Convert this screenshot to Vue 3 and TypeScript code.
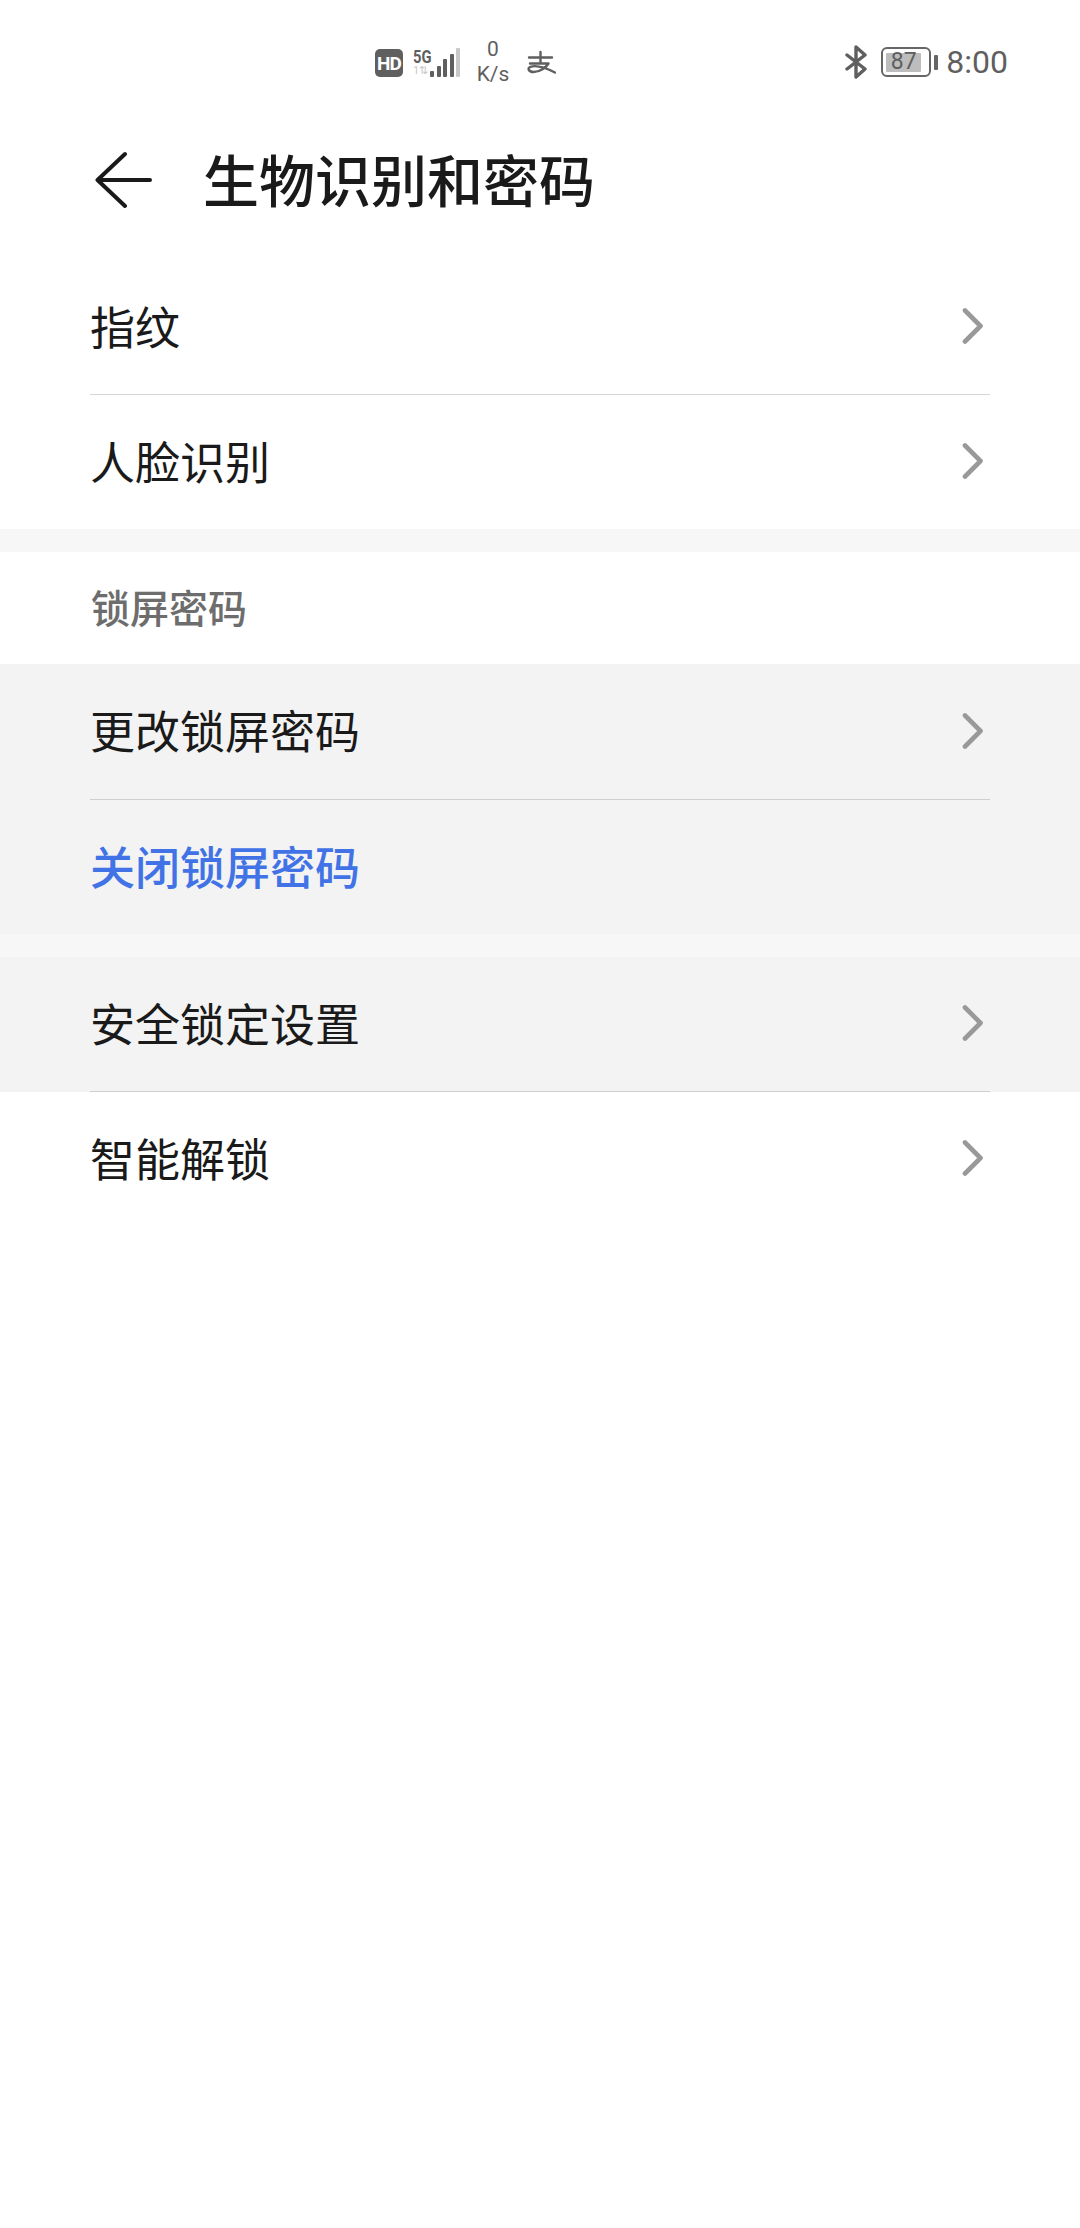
<script setup lang="ts">
interface Row { label: string; chevron?: boolean; blue?: boolean; pressed?: boolean; divider?: boolean }
const first: Row[] = [
  { label: '指纹', chevron: true, divider: true },
  { label: '人脸识别', chevron: true },
]
const second: Row[] = [
  { label: '更改锁屏密码', chevron: true, pressed: true, divider: true },
  { label: '关闭锁屏密码', blue: true, pressed: true },
]
const third: Row[] = [
  { label: '安全锁定设置', chevron: true, pressed: true, divider: true },
  { label: '智能解锁', chevron: true },
]
const groups = [
  { rows: first },
  { header: '锁屏密码', rows: second },
  { rows: third },
]
const bars = [6, 11, 18, 23, 29]
</script>

<template>
  <div class="page">
    <div class="status">
      <div class="status-center">
        <span class="hd">HD</span>
        <div class="signal">
          <div class="sig-labels">
            <span class="five-g">5G</span>
            <span class="one-x">1⇅</span>
          </div>
          <div class="bars">
            <i v-for="(h, i) in bars" :key="i" class="bar" :class="{ faint: i === 4 }" :style="{ height: h + 'px' }"></i>
          </div>
        </div>
        <div class="speed"><span>0</span><span>K/s</span></div>
        <svg class="alipay" width="30" height="26" viewBox="0 0 30 26" fill="none" stroke="#5f5f5f" stroke-width="2.400" stroke-linecap="round" stroke-linejoin="round">
          <path d="M3 8.500H26M14.500 3V14.500M4 14.500H22.500C20 18.500 14 23 7.500 23C2.500 23 1 19 4.500 17.800C10 16 19 18.500 29 23.500" />
        </svg>
      </div>
      <div class="status-right">
        <svg class="bt" width="24" height="34" viewBox="0 0 24 34" fill="none" stroke="#5f5f5f" stroke-width="3.400" stroke-linecap="round" stroke-linejoin="round">
          <path d="M3 10L21 24L12 32V2L21 10L3 24" />
        </svg>
        <div class="battery">
          <div class="cell"><span class="level">87</span></div>
          <i class="nub"></i>
        </div>
        <span class="time">8:00</span>
      </div>
    </div>

    <header class="title-bar">
      <svg class="back" width="58" height="58" viewBox="0 0 58 58" fill="none" stroke="#1a1a1a" stroke-width="4" stroke-linecap="round" stroke-linejoin="round">
        <path d="M30 3L2.500 29L30 55M2.500 29H55" />
      </svg>
      <h1 class="title">生物识别和密码</h1>
    </header>

    <main class="list">
      <section v-for="(g, gi) in groups" :key="gi" class="group">
        <div v-if="g.header" class="group-header">{{ g.header }}</div>
        <div v-for="r in g.rows" :key="r.label" class="row" :class="{ pressed: r.pressed }">
          <div class="row-inner" :class="{ divider: r.divider }">
            <span class="label" :class="{ blue: r.blue }">{{ r.label }}</span>
            <svg v-if="r.chevron" class="chev" width="24" height="36" viewBox="0 0 24 36" fill="none" stroke="#999999" stroke-width="4.600" stroke-linecap="round" stroke-linejoin="round">
              <path d="M3 2.500L18.500 18L3 33.500" />
            </svg>
          </div>
        </div>
      </section>
    </main>
  </div>
</template>

<style>
html, body { margin: 0; background: #fff; }
</style>

<style scoped>
.page {
  width: 1080px;
  height: 2228px;
  background: #fff;
  overflow: hidden;
  font-family: "Noto Sans CJK SC", "Noto Sans", sans-serif;
  color: #1a1a1a;
}
.status {
  height: 124px;
  box-sizing: border-box;
  padding: 38px 72px 0 375px;
  display: flex;
  justify-content: space-between;
  align-items: flex-start;
  font-family: Roboto, "Noto Sans", sans-serif;
  color: #5f5f5f;
}
.status-center { display: flex; align-items: center; height: 48px; }
.hd {
  width: 28px;
  height: 28px;
  margin-top: 2px;
  border-radius: 5px;
  background: #5f5f5f;
  color: #fff;
  font-size: 19px;
  font-weight: 700;
  letter-spacing: -1px;
  display: flex;
  align-items: center;
  justify-content: center;
}
.signal { display: flex; align-items: flex-end; margin-left: 10px; height: 30px; }
.sig-labels { display: flex; flex-direction: column; width: 17px; }
.five-g { font-size: 18px; font-weight: 700; line-height: 17px; transform: scaleX(0.82); transform-origin: left; }
.one-x { font-size: 11px; line-height: 12px; color: #c8c8c8; }
.bars { display: flex; align-items: flex-end; gap: 2.500px; }
.bar { width: 4px; background: #5f5f5f; border-radius: 1px; }
.bar.faint { background: #c8c8c8; }
.speed {
  display: flex;
  flex-direction: column;
  align-items: center;
  width: 36px;
  margin-left: 15px;
  font-size: 21px;
  line-height: 25px;
}
.alipay { margin-left: 15px; }
.status-right { display: flex; align-items: center; height: 48px; }
.bt { margin-right: 13px; }
.battery { display: flex; align-items: center; margin-right: 8px; }
.cell {
  width: 50px;
  height: 30px;
  box-sizing: border-box;
  border: 2.500px solid #666;
  border-radius: 6px;
  padding: 3.500px 3px;
  display: flex;
}
.level {
  flex: 0 0 87%;
  background: #bdbdbd;
  border-radius: 1px;
  color: #5f5f5f;
  font-size: 23px;
  line-height: 18px;
  text-align: center;
}
.nub { width: 4px; height: 15px; margin-left: 3px; background: #666; border-radius: 1px; }
.time { font-size: 32px; line-height: 48px; color: #5f5f5f; }

.title-bar { display: flex; align-items: center; height: 112px; padding-left: 95px; margin-bottom: 24px; }
.back { display: block; }
.title {
  margin: 0 0 4px 50px;
  font-size: 56px;
  line-height: 80px;
  font-weight: 500;
  color: #1a1a1a;
}
.list { background: #f7f7f7; }
.group + .group { margin-top: 23px; }
.group-header {
  height: 112px;
  box-sizing: border-box;
  padding: 27px 0 0 91px;
  background: #fff;
  font-size: 39px;
  line-height: 54px;
  font-weight: 500;
  color: #6d6d6d;
}
.row { background: #fff; padding: 0 90px 0 90px; }
.row.pressed { background: #f3f3f3; }
.row-inner {
  height: 134px;
  display: flex;
  align-items: center;
  justify-content: space-between;
  padding-right: 4px;
}
.row-inner.divider { height: 135px; box-sizing: border-box; border-bottom: 1.500px solid #d6d6d6; }
.row.pressed .row-inner.divider { border-bottom-color: #cfcfcf; }
.group-header + .row .row-inner.divider { height: 136px; }
.label { font-size: 45px; line-height: 60px; color: #1a1a1a; margin-bottom: 3px; }
.label.blue { color: #4273e6; font-weight: 500; }
.chev { display: block; margin-bottom: 2px; }
</style>
